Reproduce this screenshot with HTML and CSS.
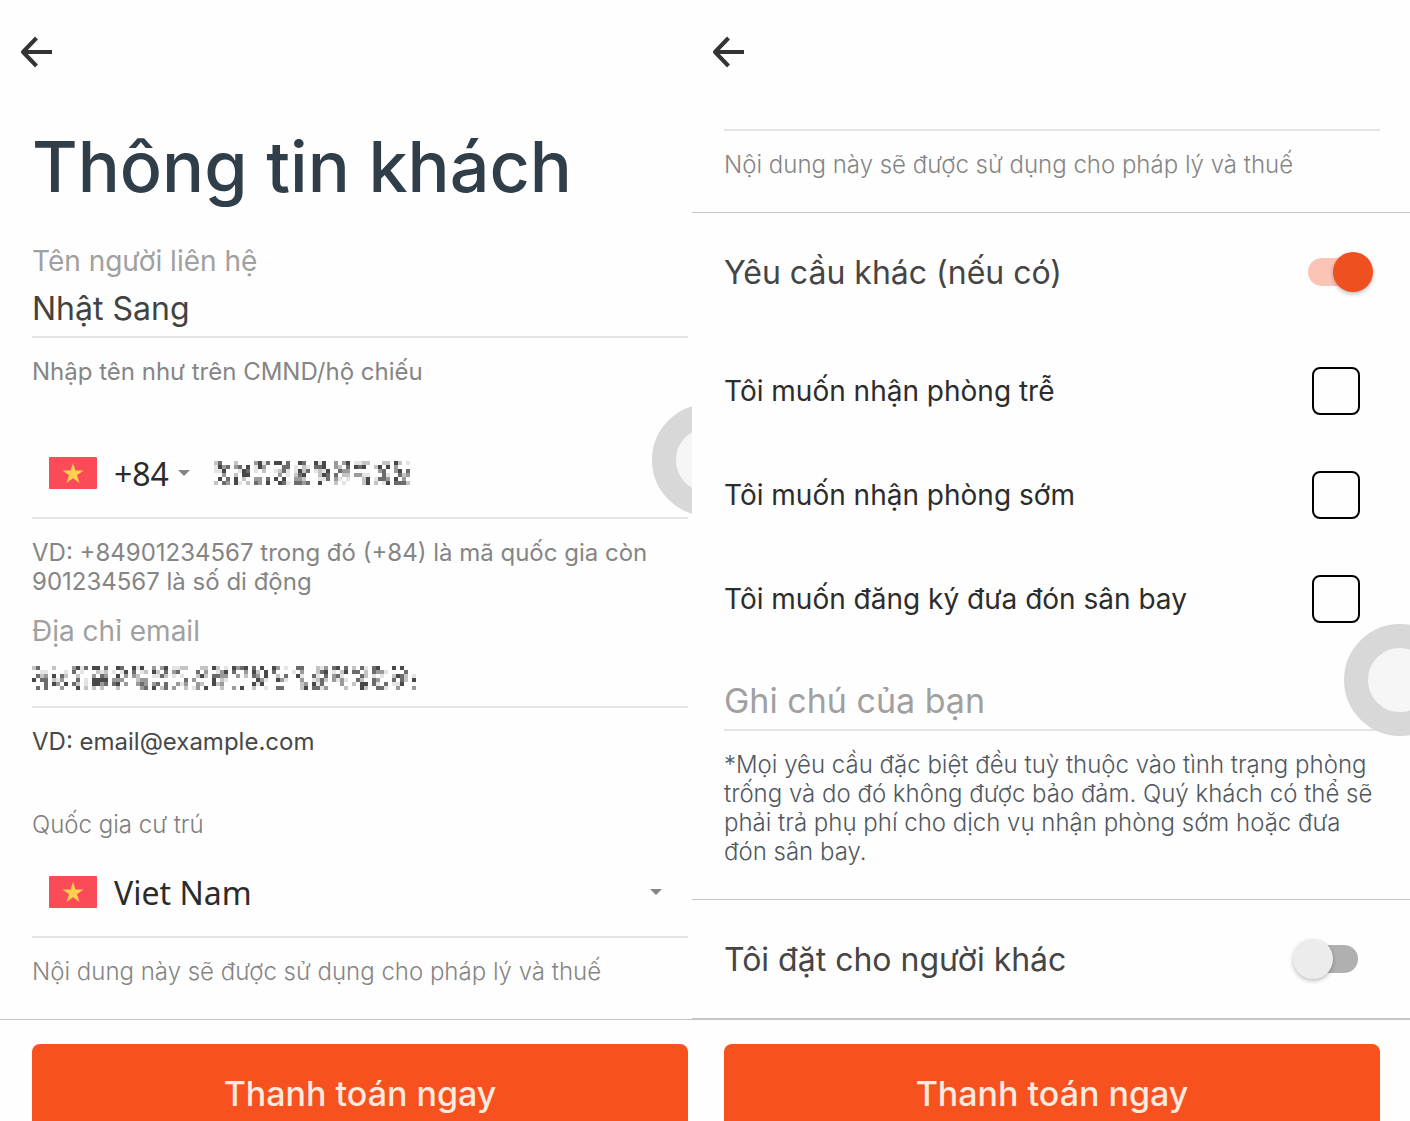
FILE: index.html
```
<!DOCTYPE html>
<html lang="vi">
<head>
    <meta charset="UTF-8">
    <meta name="viewport" content="width=device-width, initial-scale=1.0">
    <title>Thông tin khách</title>
    <link rel="stylesheet" href="styles.css">
</head>
<body>
    <div class="screens">
        <form class="screen screen-guest">
            <header class="topbar">
                <button type="button" class="back" aria-label="Quay lại">
                    <svg viewBox="0 0 36 36" width="36" height="36"><path d="M34 18H5M18.500 4L5 18l13.500 14" /></svg>
                </button>
            </header>
            <main class="content">
                <h1>Thông tin khách</h1>

                <div class="field">
                    <label class="label" for="name">Tên người liên hệ</label>
                    <input class="line-input" type="text" id="name" value="Nhật Sang">
                    <p class="hint">Nhập tên như trên CMND/hộ chiếu</p>
                </div>

                <div class="field field-phone">
                    <div class="picker">
                        <svg class="flag" viewBox="0 0 48 32" width="48" height="32"><rect width="48" height="32" rx="1" fill="#fb4b57"/><path fill="#ffd04f" d="M24 6l2.500 7.600h8l-6.500 4.700 2.500 7.700-6.500-4.800-6.500 4.800 2.500-7.700-6.500-4.700h8z"/></svg>
                        <select class="code" aria-label="Mã quốc gia">
                            <option>+84</option>
                        </select>
                        <svg class="caret" viewBox="0 0 12 6" width="12" height="6"><path d="M0 0h12L6 6z"/></svg>
                        <svg class="mosaic" data-mosaic="phone" role="img" aria-label="Số điện thoại đã che"></svg>
                    </div>
                    <p class="hint">VD: +84901234567 trong đó (+84) là mã quốc gia còn 901234567 là số di động</p>
                </div>

                <div class="field field-email">
                    <span class="label">Địa chỉ email</span>
                    <div class="line-input masked">
                        <svg class="mosaic" data-mosaic="email" role="img" aria-label="Email đã che"></svg>
                    </div>
                    <p class="hint hint-dark">VD: email@example.com</p>
                </div>

                <div class="field field-country">
                    <label class="hint-label" for="country">Quốc gia cư trú</label>
                    <div class="picker">
                        <svg class="flag" viewBox="0 0 48 32" width="48" height="32"><rect width="48" height="32" rx="1" fill="#fb4b57"/><path fill="#ffd04f" d="M24 6l2.500 7.600h8l-6.500 4.700 2.500 7.700-6.500-4.800-6.500 4.800 2.500-7.700-6.500-4.700h8z"/></svg>
                        <select class="country" id="country">
                            <option>Viet Nam</option>
                        </select>
                        <svg class="caret" viewBox="0 0 12 6" width="12" height="6"><path d="M0 0h12L6 6z"/></svg>
                    </div>
                    <p class="hint hint-light">Nội dung này sẽ được sử dụng cho pháp lý và thuế</p>
                </div>
            </main>
            <footer class="footer">
                <button type="submit" class="pay">Thanh toán ngay</button>
            </footer>
            <div class="assist"></div>
        </form>

        <form class="screen screen-request">
            <header class="topbar">
                <button type="button" class="back" aria-label="Quay lại">
                    <svg viewBox="0 0 36 36" width="36" height="36"><path d="M34 18H5M18.500 4L5 18l13.500 14" /></svg>
                </button>
            </header>
            <main>
                <section class="section section-legal">
                    <p class="hint hint-light">Nội dung này sẽ được sử dụng cho pháp lý và thuế</p>
                </section>

                <section class="section section-extra">
                    <div class="row row-switch">
                        <label for="extra">Yêu cầu khác (nếu có)</label>
                        <input class="switch" type="checkbox" id="extra" checked>
                    </div>
                    <div class="options">
                        <div class="row">
                            <label for="late">Tôi muốn nhận phòng trễ</label>
                            <input class="tick" type="checkbox" id="late">
                        </div>
                        <div class="row">
                            <label for="early">Tôi muốn nhận phòng sớm</label>
                            <input class="tick" type="checkbox" id="early">
                        </div>
                        <div class="row">
                            <label for="airport">Tôi muốn đăng ký đưa đón sân bay</label>
                            <input class="tick" type="checkbox" id="airport">
                        </div>
                    </div>
                    <input class="line-input note" type="text" placeholder="Ghi chú của bạn" aria-label="Ghi chú của bạn">
                    <p class="hint hint-slate">*Mọi yêu cầu đặc biệt đều tuỳ thuộc vào tình trạng phòng trống và do đó không được bảo đảm. Quý khách có thể sẽ phải trả phụ phí cho dịch vụ nhận phòng sớm hoặc đưa đón sân bay.</p>
                </section>

                <section class="section">
                    <div class="row row-switch">
                        <label for="other">Tôi đặt cho người khác</label>
                        <input class="switch" type="checkbox" id="other">
                    </div>
                </section>
            </main>
            <footer class="footer">
                <button type="submit" class="pay">Thanh toán ngay</button>
            </footer>
            <div class="assist"></div>
        </form>
    </div>

    <script src="mosaic.js"></script>
</body>
</html>
```
FILE: styles.css
```
* {
    box-sizing: border-box;
}
body {
    margin: 0;
    height: 100vh;
    overflow: hidden;
    background-color: #fefefe;
    font-family: Inter, "Noto Sans", sans-serif;
    color: #424242;
}
h1, p {
    margin: 0;
}
button, input, select {
    font-family: inherit;
    color: inherit;
}
.screens {
    display: grid;
    grid-template-columns: 692fr 718fr;
}
.screen {
    position: relative;
    overflow: hidden;
    display: flex;
    flex-direction: column;
    --pad-right: 30px;
}
.screen-guest {
    --pad-right: 4px;
}
.topbar {
    height: 104px;
    padding-left: 18px;
    display: flex;
    align-items: center;
}
.back {
    display: flex;
    padding: 0;
    border: none;
    background: none;
    cursor: pointer;
}
.back path {
    fill: none;
    stroke: #333;
    stroke-width: 4;
    stroke-linejoin: round;
}
.content {
    padding: 23px var(--pad-right) 33px 32px;
}
h1 {
    font-size: 70px;
    line-height: 80px;
    font-weight: 500;
    color: #303e49;
    margin-bottom: 37px;
    white-space: nowrap;
}

/* Fields */
.label {
    display: block;
    font-size: 28px;
    line-height: 34px;
    color: #a0a0a0;
}
.hint-label {
    display: block;
    font-size: 24px;
    line-height: 29px;
    font-weight: 300;
    color: #7d7d7d;
    margin-bottom: 9px;
}
.line-input {
    display: flex;
    align-items: center;
    width: 100%;
    height: 60px;
    padding: 2px 0 0;
    border: none;
    border-bottom: 2px solid #e4e4e4;
    border-radius: 0;
    background: none;
    font-size: 32px;
    outline: none;
}
.line-input::placeholder {
    color: #a0a0a0;
    opacity: 1;
}
.note {
    padding-top: 0;
    font-size: 34px;
}
.hint {
    margin-top: 19px;
    font-size: 24px;
    line-height: 29px;
    color: #858585;
}
.hint-dark {
    color: #484848;
}
.hint-light {
    font-weight: 300;
}
.hint-slate {
    font-weight: 300;
    color: #50585e;
}
.field-phone {
    margin-top: 43px;
}
.field-email {
    margin-top: 18px;
}
.field-country {
    margin-top: 54px;
}

/* Flag + dropdown line */
.picker {
    display: flex;
    align-items: center;
    height: 90px;
    padding: 0 26px 0 17px;
    border-bottom: 2px solid #e4e4e4;
}
.picker select {
    appearance: none;
    border: none;
    background: none;
    padding: 0;
    margin-left: 17px;
    height: 48px;
    font-family: "Noto Sans", sans-serif;
    font-size: 32px;
    color: #2b2b2b;
}
.picker .code {
    width: 64px;
}
.picker .country {
    flex: 1;
}
.caret {
    fill: #858585;
}
.mosaic {
    display: block;
}
.picker .mosaic {
    margin-left: 24px;
}

/* Request screen */
.section {
    padding: 0 var(--pad-right) 0 32px;
    border-bottom: 1px solid #c6c6c6;
}
.section:last-child {
    border-bottom: none;
}
.section-legal {
    padding-top: 25px;
    padding-bottom: 33px;
}
.section-legal .hint {
    margin-top: 0;
    padding-top: 19px;
    border-top: 2px solid #e4e4e4;
}
.section-extra {
    padding-bottom: 33px;
}
.row {
    display: flex;
    align-items: center;
    justify-content: space-between;
    height: 104px;
    font-size: 28px;
    color: #2c2c2c;
}
.row-switch {
    height: 118px;
    font-size: 32px;
    color: #454545;
}
.options {
    padding: 8px 0 20px;
}
.tick {
    appearance: none;
    width: 48px;
    height: 48px;
    margin: 0 20px 0 0;
    border: 2px solid #000;
    border-radius: 8px;
}
.switch {
    appearance: none;
    display: flex;
    align-items: center;
    width: 56px;
    height: 28px;
    margin: 0 22px 0 0;
    border-radius: 14px;
    background-color: #b0b0b0;
}
.switch::before {
    content: "";
    flex: none;
    width: 40px;
    height: 40px;
    margin-left: -9px;
    border-radius: 50%;
    background-color: #ececec;
    box-shadow: 0 2px 4px rgba(0,0,0,0.25);
}
.switch:checked {
    margin-right: 16px;
    background-color: #fbc4b5;
}
.switch:checked::before {
    margin-left: 25px;
    background-color: #ee5020;
}

/* Bottom bar */
.footer {
    padding: 24px var(--pad-right) 24px 32px;
    border-top: 1px solid #c6c6c6;
}
.screen-request .footer {
    border-top-width: 2px;
}
.pay {
    width: 100%;
    height: 98px;
    border: none;
    border-radius: 8px;
    background-color: #f7511f;
    color: #ffeadf;
    font-size: 34px;
    font-weight: 500;
    cursor: pointer;
}

/* Floating touch button */
.assist {
    position: absolute;
    top: 404px;
    right: -72px;
    width: 112px;
    height: 112px;
    border: 24px solid #d8d8d8;
    border-radius: 50%;
    background-color: #f6f6f6;
}
.screen-request .assist {
    top: 624px;
    right: -46px;
}
```
FILE: mosaic.js
```
// Pixelated blocks that hide the private phone number and email.
const sizes = {
    phone: { columns: 49, rows: 6 },
    email: { columns: 96, rows: 6 }
};
const greys = ['#fefefe', '#fefefe', '#e4e4e4', '#fefefe', '#c4c4c4', '#9a9a9a', '#6c6c6c', '#484848'];
const cell = 4;

document.querySelectorAll('[data-mosaic]').forEach((svg) => {
    const { columns, rows } = sizes[svg.dataset.mosaic];
    svg.setAttribute('width', columns * cell);
    svg.setAttribute('height', rows * cell);

    let seed = 7;
    let html = '';
    for (let y = 0; y < rows; y++) {
        for (let x = 0; x < columns; x++) {
            seed = (seed * 1103515245 + 12345) % 2147483648;
            const gap = x % 5 === 4;
            const level = gap ? 0 : Math.floor(seed / 65536) % greys.length;
            html += `<rect x="${x * cell}" y="${y * cell}" width="${cell}" height="${cell}" fill="${greys[level]}"/>`;
        }
    }
    svg.innerHTML = html;
});
```
